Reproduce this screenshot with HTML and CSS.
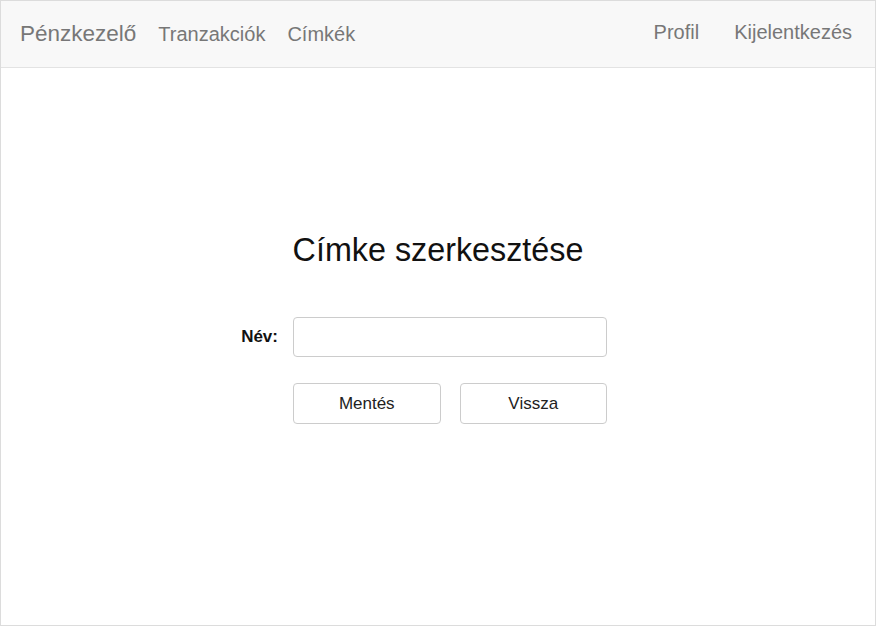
FILE: index.html
```html
<!DOCTYPE html>
<html lang="hu">
<head>
<meta charset="utf-8">
<title>Címke szerkesztése</title>
<link rel="stylesheet" href="styles.css">
</head>
<body>
<div class="frame">
  <nav class="nav">
    <div class="nav-left">
      <a class="brand" href="#">Pénzkezelő</a>
      <a class="link" href="#">Tranzakciók</a>
      <a class="link" href="#">Címkék</a>
    </div>
    <div class="nav-right">
      <a class="link" href="#">Profil</a>
      <a class="link" href="#">Kijelentkezés</a>
    </div>
  </nav>
  <main class="main">
    <h1 class="title">Címke szerkesztése</h1>
    <form class="form">
      <label class="label" for="nev">Név:</label>
      <input class="input" id="nev" type="text">
      <div class="actions">
        <button class="btn" type="button">Mentés</button>
        <button class="btn" type="button">Vissza</button>
      </div>
    </form>
  </main>
</div>
</body>
</html>
```
FILE: styles.css
```css
* { box-sizing: border-box; }
html, body { margin: 0; padding: 0; background: #fff; }
body { font-family: "Liberation Sans", Arial, sans-serif; }

.frame {
  width: 876px;
  height: 626px;
  border: 1px solid #dcdcdc;
  background: #fff;
}

.nav {
  display: flex;
  justify-content: space-between;
  align-items: flex-start;
  height: 67px;
  background: #f8f8f8;
  border-bottom: 1px solid #e3e3e3;
  padding: 0 23px 0 19px;
}
.nav a { text-decoration: none; color: #777; }
.nav-left {
  display: flex;
  align-items: baseline;
  gap: 22px;
  padding-top: 23px;
}
.nav-right {
  display: flex;
  align-items: baseline;
  gap: 35px;
  padding-top: 21px;
}
.brand { font-size: 22.5px; line-height: 20px; }
.link { font-size: 20px; line-height: 20px; }

.main { padding-top: 162px; }
.title {
  margin: 0;
  text-align: center;
  font-size: 32.3px;
  line-height: 40px;
  font-weight: normal;
  color: #111;
}

.form {
  display: grid;
  grid-template-columns: 277px 314px;
  column-gap: 15px;
  row-gap: 26px;
  align-items: center;
  margin-top: 47px;
}
.label {
  justify-self: end;
  font-weight: bold;
  font-size: 17px;
  line-height: 20px;
  color: #111;
}
.input {
  width: 314px;
  height: 40px;
  border: 1px solid #ccc;
  border-radius: 4px;
  background: #fff;
  margin: 0;
  font: inherit;
}
.actions {
  grid-column: 2;
  display: grid;
  grid-template-columns: 1fr 1fr;
  column-gap: 19px;
}
.btn {
  height: 41px;
  border: 1px solid #ccc;
  border-radius: 4px;
  background: #fff;
  font-family: "Liberation Sans", Arial, sans-serif;
  font-size: 17px;
  color: #222;
  padding: 0;
}
```
